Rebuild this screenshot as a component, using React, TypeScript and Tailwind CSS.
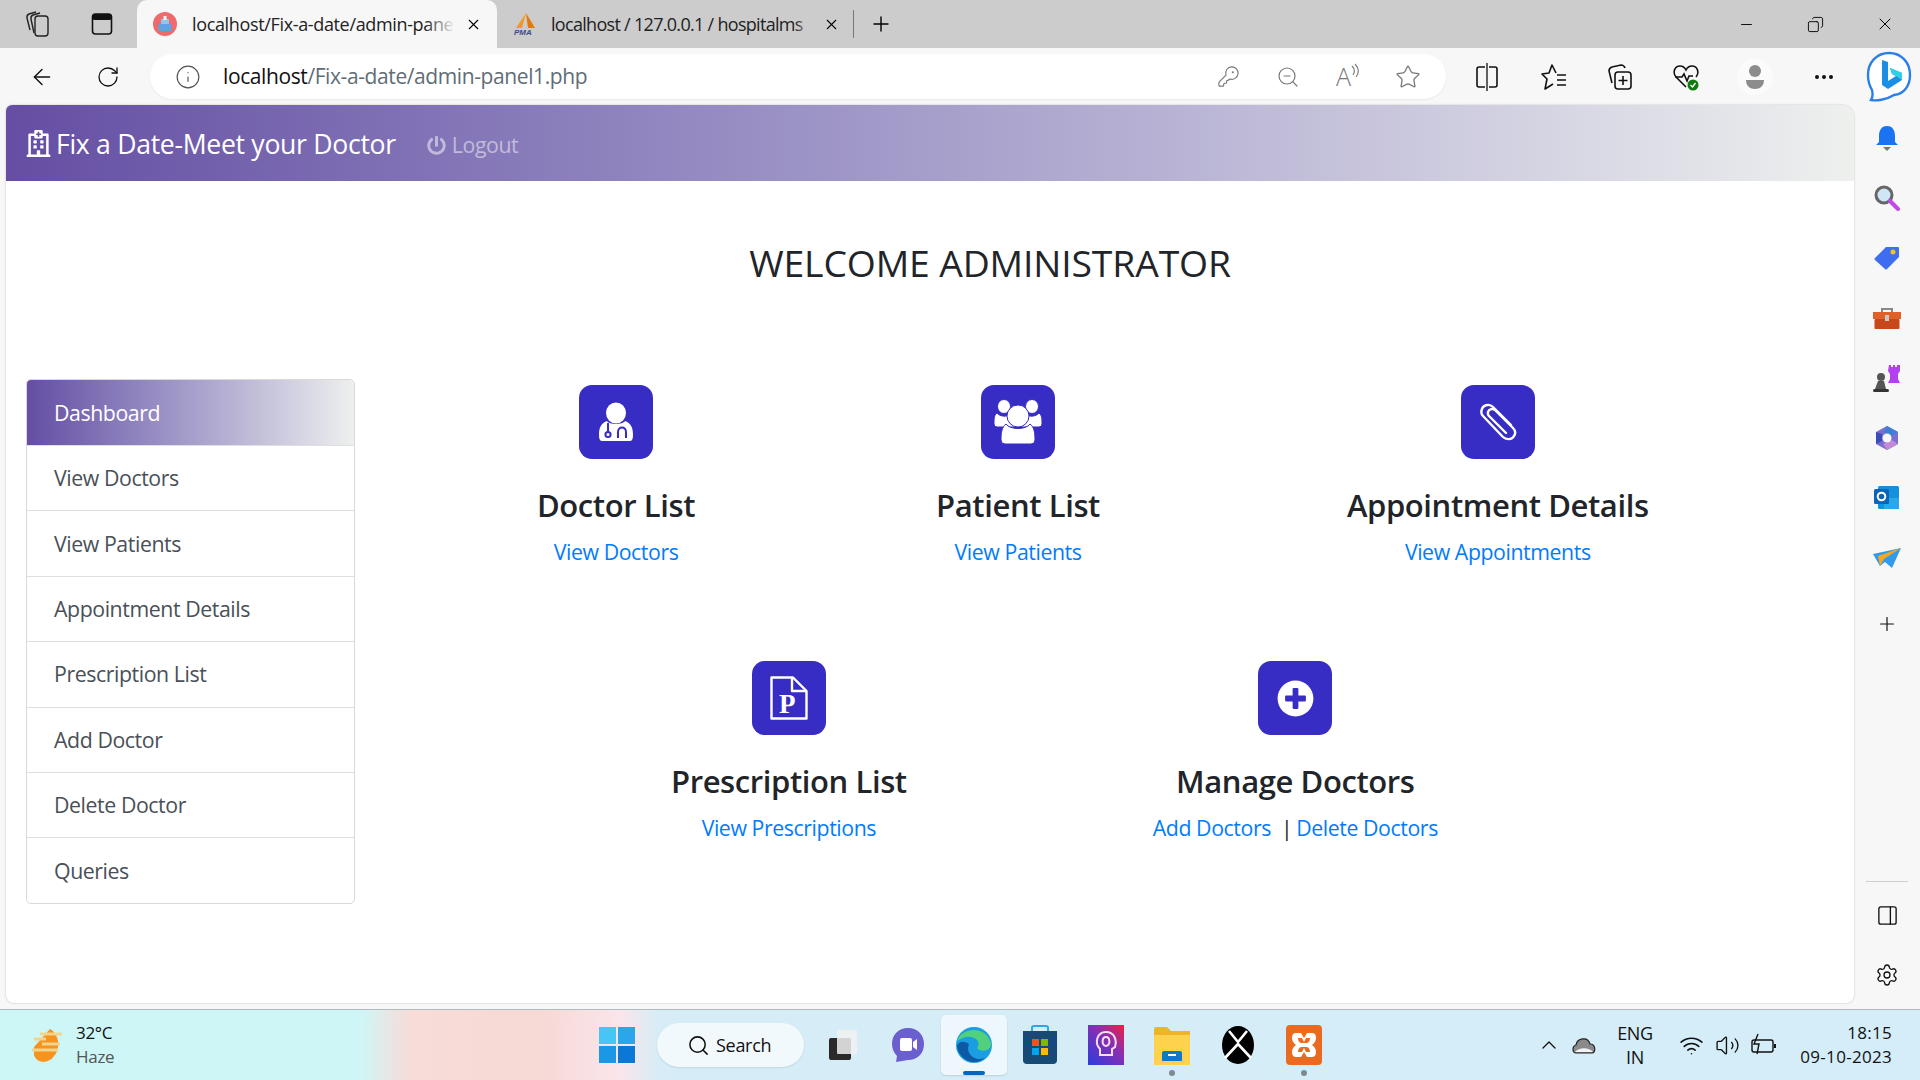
import type { ReactNode } from 'react';
import {
  ArrowLeft,
  ChevronUp,
  Copy,
  Ellipsis,
  KeyRound,
  Info,
  Minus,
  PanelRight,
  Plus,
  RotateCw,
  Search,
  Settings,
  Star,
  Volume2,
  Wifi,
  X,
  ZoomOut,
} from 'lucide-react';
import { FaPlusCircle, FaPowerOff, FaRegHospital } from 'react-icons/fa';

const MENU = [
  'View Doctors',
  'View Patients',
  'Appointment Details',
  'Prescription List',
  'Add Doctor',
  'Delete Doctor',
  'Queries',
];

function TabBar() {
  return (
    <div className="flex h-12 items-center bg-[#cccccc] text-black">
      <div className="flex w-[137px] shrink-0 items-center">
        <span className="flex w-[76px] justify-center">
          <svg width="26" height="28" viewBox="0 0 26 28" fill="none" stroke="#222" strokeWidth="1.4">
            <path d="M5 20 L2 8 Q1.5 5 4 4 L11 2" />
            <path d="M9 23 L6 9 Q5.5 6 8 5 L15 3" />
            <rect x="10" y="6" width="13" height="20" rx="3" />
          </svg>
        </span>
        <span className="flex w-[61px] justify-start pl-[15px]">
          <svg width="22" height="24" viewBox="0 0 22 24">
            <rect x="1.5" y="2" width="19" height="20" rx="3" fill="none" stroke="#111" strokeWidth="1.6" />
            <rect x="1.5" y="2" width="19" height="6" rx="2" fill="#111" />
          </svg>
        </span>
      </div>
      <div className="relative flex h-12 w-[360px] shrink-0 items-center rounded-t-[10px] bg-[#f7f7f7] pl-4">
        <svg width="24" height="24" viewBox="0 0 24 24" className="shrink-0">
          <circle cx="12" cy="12" r="12" fill="#ef6a6a" />
          <rect x="8" y="7" width="8" height="12" fill="#8ec6ee" />
          <rect x="10.5" y="4" width="3" height="4" fill="#f3f3f3" />
          <rect x="5.5" y="12" width="13" height="7" fill="#5aa4e0" />
        </svg>
        <span className="relative ml-[15px] w-[263px] shrink-0 overflow-hidden whitespace-nowrap text-[18px] tracking-[-0.35px] text-[#222]">
          localhost/Fix-a-date/admin-pane
          <span className="absolute inset-y-0 right-0 w-[30px] bg-gradient-to-r from-transparent to-[#f7f7f7]" />
        </span>
        <X size={17} strokeWidth={1.5} className="ml-[10px] shrink-0" />
      </div>
      <div className="flex h-12 shrink-0 items-center pl-[16px]">
        <svg width="24" height="24" viewBox="0 0 24 24" className="shrink-0">
          <path d="M13 1 L9 16 L3 16 Z" fill="#f29a1f" />
          <path d="M13 1 L22 16 L15 16 Z" fill="#e8760c" />
          <text x="1" y="23" fontSize="8" fontWeight="700" fontStyle="italic" fill="#3b4a86" fontFamily="Liberation Sans">
            PMA
          </text>
        </svg>
        <span className="relative ml-[14px] w-[262px] shrink-0 overflow-hidden whitespace-nowrap text-[18px] tracking-[-0.7px] text-[#222]">
          localhost / 127.0.0.1 / hospitalms
          <span className="absolute inset-y-0 right-0 w-[18px] bg-gradient-to-r from-transparent to-[#cccccc]" />
        </span>
        <X size={17} strokeWidth={1.5} className="ml-[10px] shrink-0" />
        <span className="ml-[13px] h-7 w-px shrink-0 bg-[#777]" />
        <Plus size={24} strokeWidth={1.4} className="ml-[15px] shrink-0" />
      </div>
      <div className="ml-auto flex items-center">
        <span className="flex w-[69px] justify-center">
          <Minus size={17} strokeWidth={1.3} />
        </span>
        <span className="flex w-[69px] justify-center">
          <Copy size={17} strokeWidth={1.3} className="-scale-x-100" />
        </span>
        <span className="flex w-[70px] justify-center">
          <X size={20} strokeWidth={1.2} />
        </span>
      </div>
    </div>
  );
}

function ToolSlot({ className, children }: { className: string; children: ReactNode }) {
  return <span className={`flex shrink-0 items-center justify-center ${className}`}>{children}</span>;
}

function BingLogo() {
  return (
    <svg width="46" height="52" viewBox="0 0 46 52">
      <path
        d="M23 2 C35 2 44 11 44 24 C44 35 38 43 28 44 C20 49 10 50 5 49 C7 46 7 43 6 39 C3 34 2 29 2 24 C2 11 11 2 23 2 Z"
        fill="#fff"
        stroke="#2a7fe8"
        strokeWidth="2.4"
      />
      <path d="M16 9 L22 11 L22 30 L30 25 L26 23 L24 17 L36 22 L36 29 L22 38 L16 34 Z" fill="#1b8fe6" />
      <path d="M24 17 L36 22 L36 29 L30 25 L26 23 Z" fill="#2fd0e8" />
    </svg>
  );
}

function ToolBar() {
  return (
    <div className="flex h-[57px] items-center bg-[#f7f7f7] text-[#111]">
      <ToolSlot className="w-[84px]">
        <ArrowLeft size={26} strokeWidth={1.3} />
      </ToolSlot>
      <ToolSlot className="w-[48px]">
        <RotateCw size={24} strokeWidth={1.3} />
      </ToolSlot>
      <div className="ml-[18px] flex h-[45px] w-[1296px] shrink-0 items-center rounded-full bg-white pl-[25px] shadow-[0_1px_2px_rgba(0,0,0,0.06)]">
        <Info size={26} strokeWidth={1.1} className="shrink-0 text-[#555]" />
        <span className="ml-[22px] text-[21px] tracking-[-0.4px] text-[#5f6d75]">
          <span className="text-[#111]">localhost</span>/Fix-a-date/admin-panel1.php
        </span>
        <span className="ml-auto flex items-center pr-[8px] text-[#777]">
          <ToolSlot className="w-[60px]">
            <KeyRound size={23} strokeWidth={1.2} />
          </ToolSlot>
          <ToolSlot className="w-[60px]">
            <ZoomOut size={24} strokeWidth={1.2} />
          </ToolSlot>
          <ToolSlot className="w-[60px]">
            <span className="text-[25px] font-light leading-none">A</span>
            <svg width="9" height="16" viewBox="0 0 9 16" fill="none" stroke="#777" strokeWidth="1.1" className="mb-3">
              <path d="M1 3 C4 6 4 9 2 12 M4 1 C8 5 8 10 5 14" />
            </svg>
          </ToolSlot>
          <ToolSlot className="w-[60px]">
            <Star size={26} strokeWidth={1.2} />
          </ToolSlot>
        </span>
      </div>
      <ToolSlot className="ml-[11px] w-[60px]">
        <svg width="24" height="30" viewBox="0 0 24 30" fill="none" stroke="#111" strokeWidth="1.6">
          <path d="M10 5 H4 Q2 5 2 7 V23 Q2 25 4 25 H10" />
          <path d="M14 5 H20 Q22 5 22 7 V23 Q22 25 20 25 H14" />
          <path d="M12 1 V29" strokeWidth="1.3" />
        </svg>
      </ToolSlot>
      <ToolSlot className="ml-[4px] w-[66px]">
        <svg width="26" height="28" viewBox="0 0 26 28" fill="none" stroke="#111" strokeWidth="1.6">
          <path d="M15 10 L11 2 L8 10 L1 11 L6 16 L4 26 L12 21" strokeLinejoin="round" />
          <path d="M16 12 H25 M16 17 H25 M16 22 H25" />
        </svg>
      </ToolSlot>
      <ToolSlot className="w-[66px]">
        <svg width="26" height="28" viewBox="0 0 26 28" fill="none" stroke="#111" strokeWidth="1.6">
          <path d="M5 20 L2 8 Q2 5 5 4 L14 2 Q17 2 18 5" />
          <rect x="8" y="9" width="16" height="17" rx="3" />
          <path d="M16 13 V22 M11.5 17.5 H20.5" />
        </svg>
      </ToolSlot>
      <ToolSlot className="w-[66px]">
        <svg width="28" height="28" viewBox="0 0 28 28" fill="none" stroke="#111" strokeWidth="1.6">
          <path d="M14 24 L4 14 C0 9 3 3 8 3 C11 3 13 5 14 7 C15 5 17 3 20 3 C25 3 28 9 24 14" />
          <path d="M3 14 H10 L12 11 L15 18 L17 13 H21" />
          <circle cx="21" cy="22" r="5.5" fill="#107c10" stroke="none" />
          <path d="M18.5 22 L20.5 24 L23.5 20" stroke="#fff" strokeWidth="1.3" />
        </svg>
      </ToolSlot>
      <ToolSlot className="w-[72px]">
        <span className="flex h-[36px] w-[36px] items-center justify-center rounded-full bg-[#fbfbfb]">
          <svg width="22" height="26" viewBox="0 0 22 26" fill="#8c8c8c">
            <circle cx="11" cy="7" r="6" />
            <path d="M2 16 H20 C20 22 16 25 11 25 C6 25 2 22 2 16 Z" />
          </svg>
        </span>
      </ToolSlot>
      <ToolSlot className="w-[66px]">
        <Ellipsis size={24} strokeWidth={2} />
      </ToolSlot>
      <ToolSlot className="ml-auto w-[64px]">
        <BingLogo />
      </ToolSlot>
    </div>
  );
}

function SideIcon({ children }: { children: ReactNode }) {
  return <span className="flex h-[60px] items-center justify-center">{children}</span>;
}

function EdgeSidebar() {
  return (
    <aside className="flex w-[66px] shrink-0 flex-col items-center pt-[3px] text-[#111]">
      <SideIcon>
        <svg width="24" height="26" viewBox="0 0 24 26">
          <path d="M12 1 C18 1 20 6 20 11 V17 L23 20 H1 L4 17 V11 C4 6 6 1 12 1 Z" fill="#1a73f0" />
          <path d="M8 22 H16 L12 26 Z" fill="#777" />
        </svg>
      </SideIcon>
      <SideIcon>
        <svg width="26" height="26" viewBox="0 0 26 26">
          <circle cx="10" cy="10" r="8" fill="#cfe6f7" stroke="#666" strokeWidth="3" />
          <path d="M16 16 L24 24" stroke="#c04ae8" strokeWidth="4" strokeLinecap="round" />
        </svg>
      </SideIcon>
      <SideIcon>
        <svg width="26" height="24" viewBox="0 0 26 24">
          <path d="M12 1 H24 Q25 1 25 2 V11 L13 23 Q12 24 11 23 L1 14 Q0 13 1 12 Z" fill="#3f6df0" />
          <circle cx="19" cy="6" r="2.5" fill="#f5c518" />
        </svg>
      </SideIcon>
      <SideIcon>
        <svg width="28" height="22" viewBox="0 0 28 22">
          <path d="M9 6 V2 H19 V6" fill="none" stroke="#888" strokeWidth="2" />
          <rect x="0" y="5" width="28" height="7" fill="#e0602a" />
          <rect x="1.5" y="12" width="25" height="10" rx="1" fill="#c8481c" />
          <rect x="12" y="8" width="4" height="6" fill="#c9c9c9" />
        </svg>
      </SideIcon>
      <SideIcon>
        <svg width="28" height="28" viewBox="0 0 28 28">
          <path d="M16 1 H18 V3 H20 V1 H22 V3 H24 V1 H27 V7 L25 10 V15 L27 19 H15 L17 15 V10 L15 7 Z" fill="#b23ff0" />
          <circle cx="8" cy="13" r="4" fill="#555" />
          <path d="M5 17 H11 L13 25 H2 L5 17 Z" fill="#555" />
          <rect x="0" y="25" width="16" height="3" rx="1.5" fill="#333" />
        </svg>
      </SideIcon>
      <SideIcon>
        <svg width="26" height="26" viewBox="0 0 26 26">
          <path d="M13 1 L24 7 V19 L13 25 L2 19 V7 Z" fill="#7a6fd0" />
          <path d="M13 1 L24 7 L17 11 L10 7 Z" fill="#3c7fd6" />
          <path d="M2 7 V19 L8 16 V9 Z" fill="#3b4cb8" />
          <path d="M24 19 L13 25 L9 19 L18 15 Z" fill="#c38ad8" />
          <circle cx="13" cy="13" r="4.5" fill="#f7f7f7" />
        </svg>
      </SideIcon>
      <SideIcon>
        <svg width="26" height="24" viewBox="0 0 26 24">
          <rect x="4" y="0" width="21" height="23" rx="1.5" fill="#1490df" />
          <path d="M10 12 L25 12 V23 H10 Z" fill="#28a8ea" />
          <rect x="0" y="3" width="15" height="15" rx="1.5" fill="#0a64b8" />
          <circle cx="7.5" cy="10.5" r="3.8" fill="none" stroke="#fff" strokeWidth="2" />
        </svg>
      </SideIcon>
      <SideIcon>
        <svg width="28" height="20" viewBox="0 0 28 20">
          <path d="M0 6 L28 0 L19 20 L12 14 L7 18 Z" fill="#2f9bea" />
          <path d="M7 18 L5 8 L28 0 L11 11 Z" fill="#f5a623" />
        </svg>
      </SideIcon>
      <span className="flex h-[71px] items-center justify-center">
        <Plus size={22} strokeWidth={1.3} />
      </span>
      <span className="mt-[222px] h-px w-[42px] bg-[#d0d0d0]" />
      <span className="flex h-[66px] items-center justify-center">
        <PanelRight size={23} strokeWidth={1.4} />
      </span>
      <span className="flex h-[54px] items-center justify-center">
        <Settings size={24} strokeWidth={1.3} />
      </span>
    </aside>
  );
}

function Sidebar() {
  return (
    <div className="ml-[20px] w-[329px] shrink-0 self-start overflow-hidden rounded-[5px] border border-[#d9d9d9] bg-white text-[21.3px] tracking-[-0.42px] text-[#495057]">
      <div className="flex h-[65px] items-center bg-gradient-to-r from-[#654ea3] to-[#eef0ee] pl-[27px] text-white">
        Dashboard
      </div>
      {MENU.map((item) => (
        <div key={item} className="flex h-[65.4px] items-center border-t border-[#dfdfdf] pl-[27px]">
          {item}
        </div>
      ))}
    </div>
  );
}

function DoctorIcon() {
  return (
    <svg width="36" height="40" viewBox="0 0 36 40" fill="#fff">
      <ellipse cx="18" cy="11" rx="10" ry="10.5" />
      <path d="M9 19 C4 21 1 24 1 33 Q1 39 4 39 H32 Q35 39 35 33 C35 24 32 21 27 19 C25 23 11 23 9 19 Z" />
      <path d="M10 21 V30" stroke="#372cc4" strokeWidth="2" fill="none" />
      <circle cx="10" cy="32.5" r="2.6" fill="none" stroke="#372cc4" strokeWidth="2" />
      <path d="M20 36 V30 C20 24 28 24 28 30 V36" stroke="#372cc4" strokeWidth="2" fill="none" />
    </svg>
  );
}

function UsersIcon() {
  return (
    <svg width="48" height="46" viewBox="0 0 48 46" fill="#fff" stroke="#372cc4" strokeWidth="1">
      <ellipse cx="10" cy="7.5" rx="6.5" ry="7" />
      <ellipse cx="38" cy="7.5" rx="6.5" ry="7" />
      <path d="M3 14 C0 16 0 20 0 25 Q0 28 3 28 H45 Q48 28 48 25 C48 20 48 16 45 14 C42 18 34 18 32 15 L16 15 C14 18 6 18 3 14 Z" />
      <path d="M12 25 C8 28 7 33 7 41 Q7 45 11 45 H37 Q41 45 41 41 C41 33 40 28 36 25 C32 31 16 31 12 25 Z" />
      <ellipse cx="24" cy="17" rx="11" ry="11" />
    </svg>
  );
}

function ClipIcon() {
  return (
    <svg width="38" height="38" viewBox="0 0 38 38" fill="none" stroke="#fff" strokeWidth="2.4" strokeLinecap="round" strokeLinejoin="round">
      <path d="M32 22 L14 4 C10 0 3 2 2.5 8 C2 10 3 12 4 13 L24 34 C27 37 33 37 35 33 C37 30 36 27 34 25 L16 7 C14 5 10 6 9 9 C8.5 11 9 12 10 13 L27 30" />
    </svg>
  );
}

function PrescriptionIcon() {
  return (
    <svg width="38" height="44" viewBox="0 0 38 44" fill="none" stroke="#fff" strokeWidth="2.4" strokeLinejoin="round">
      <path d="M1.5 1.5 H23 L36.5 15 V42.5 H1.5 Z" />
      <path d="M22 1.5 V15 H36.5" />
      <text x="9" y="37" fontSize="27" fontWeight="700" fill="#fff" stroke="none" fontFamily="Liberation Serif">
        P
      </text>
    </svg>
  );
}

function Feature({
  icon,
  title,
  className = '',
  children,
}: {
  icon: ReactNode;
  title: string;
  className?: string;
  children: ReactNode;
}) {
  return (
    <div className={`flex flex-col items-center ${className}`}>
      <span className="flex h-[74px] w-[74px] items-center justify-center rounded-[13px] bg-[#372cc4] text-white">
        {icon}
      </span>
      <h4 className="mt-[27px] whitespace-nowrap text-[31px] font-semibold leading-[38px] tracking-[-0.4px] text-[#212529]">
        {title}
      </h4>
      <div className="mt-[9px] whitespace-nowrap text-[21.3px] leading-[38px] tracking-[-0.42px] text-[#007bff]">
        {children}
      </div>
    </div>
  );
}

function Page() {
  return (
    <main className="h-[898px] overflow-hidden rounded-b-[8px] rounded-tl-[6px] rounded-tr-[12px] bg-white shadow-[0_0_2px_rgba(0,0,0,0.25)]">
      <header className="flex h-[76px] items-center bg-gradient-to-r from-[#654ea3] to-[#eef0ee] pl-[19px]">
        <FaRegHospital size={27} className="text-white" />
        <span className="ml-[4px] pt-[4px] text-[26.6px] tracking-[-0.3px] text-white">Fix a Date-Meet your Doctor</span>
        <span className="ml-[31px] flex items-center pt-[4px] text-[21.3px] tracking-[-0.42px] text-white/50">
          <FaPowerOff size={19} className="mr-[6px]" />
          Logout
        </span>
      </header>
      <h3 className="mt-[57px] pl-[120px] text-center text-[37.3px] font-normal leading-[50px] tracking-[-0.13px] text-[#212529]">
        WELCOME ADMINISTRATOR
      </h3>
      <div className="mt-[91px] flex">
        <Sidebar />
        <div className="flex flex-col pt-[6px]">
          <div className="ml-[182px] flex gap-[241px]">
            <Feature icon={<DoctorIcon />} title="Doctor List">
              View Doctors
            </Feature>
            <Feature icon={<UsersIcon />} title="Patient List">
              View Patients
            </Feature>
            <Feature icon={<ClipIcon />} title="Appointment Details" className="ml-[6px]">
              View Appointments
            </Feature>
          </div>
          <div className="ml-[316px] mt-[90px] flex gap-[246px]">
            <Feature icon={<PrescriptionIcon />} title="Prescription List">
              View Prescriptions
            </Feature>
            <Feature icon={<FaPlusCircle size={37} />} title="Manage Doctors">
              Add Doctors<span className="ml-[10px] mr-[4px] text-[#212529]">|</span>Delete Doctors
            </Feature>
          </div>
        </div>
      </div>
    </main>
  );
}

function TaskSlot({ children, active, dot }: { children: ReactNode; active?: boolean; dot?: boolean }) {
  return (
    <span
      className={`relative flex h-[60px] w-[66px] shrink-0 items-center justify-center rounded-[5px] ${
        active ? 'bg-[#eef7fc] shadow-[0_1px_2px_rgba(0,0,0,0.12)]' : ''
      }`}
    >
      {children}
      {active && <span className="absolute bottom-0 h-[4px] w-[22px] rounded-full bg-[#0067c0]" />}
      {dot && <span className="absolute bottom-[-1px] h-[6px] w-[6px] rounded-full bg-[#7d8a90]" />}
    </span>
  );
}

function Taskbar() {
  return (
    <footer className="flex h-[71px] items-center border-t border-[#aebcc0] bg-[linear-gradient(90deg,#cdf6f7_0,#cff6f7_360px,#f7dcd8_410px,#f7d9d5_540px,#fae5ea_620px,#d6edf7_660px,#d4edf8_100%)] text-[#111]">
      <span className="ml-[28px] flex w-[48px] shrink-0 justify-start">
        <svg width="36" height="36" viewBox="0 0 36 36">
          <path d="M22 2 C32 8 34 24 22 33 C14 37 8 34 6 28 L6 20 Z" fill="#f7931e" />
          <path d="M6 12 H18 M12 7 H34 M14 17 H32 M4 23 H30" stroke="#f2d58c" strokeWidth="3" />
        </svg>
      </span>
      <span className="flex w-[100px] shrink-0 flex-col text-[17px] leading-[24px] tracking-[-0.3px]">
        <span>32°C</span>
        <span className="text-[#555]">Haze</span>
      </span>
      <span className="ml-[423px] flex shrink-0">
        <svg width="36" height="36" viewBox="0 0 36 36">
          <rect x="0" y="0" width="17" height="17" fill="#45c6f7" />
          <rect x="19" y="0" width="17" height="17" fill="#2aa6ec" />
          <rect x="0" y="19" width="17" height="17" fill="#1a97e6" />
          <rect x="19" y="19" width="17" height="17" fill="#0a78d4" />
        </svg>
      </span>
      <span className="ml-[22px] flex h-[44px] w-[147px] shrink-0 items-center rounded-full bg-[#f1f9fd] pl-[30px] text-[18px] tracking-[-0.3px] shadow-[0_1px_2px_rgba(0,0,0,0.1)]">
        <Search size={23} strokeWidth={1.6} className="mr-[6px]" />
        Search
      </span>
      <span className="ml-[5px] flex shrink-0">
        <TaskSlot>
          <svg width="34" height="34" viewBox="0 0 34 34">
            <rect x="4" y="10" width="22" height="22" rx="2" fill="#2a2a2a" />
            <rect x="12" y="2" width="20" height="24" rx="1" fill="#f1f1f1" fillOpacity="0.85" />
          </svg>
        </TaskSlot>
        <TaskSlot>
          <svg width="34" height="36" viewBox="0 0 34 36">
            <path d="M17 1 C27 1 33 8 33 17 C33 27 26 33 17 33 L5 35 L6 29 C3 26 1 22 1 17 C1 8 7 1 17 1 Z" fill="#6b5fd0" />
            <rect x="9" y="11" width="12" height="13" rx="2" fill="#fff" />
            <path d="M22 15 L26 12 V23 L22 20 Z" fill="#fff" />
          </svg>
        </TaskSlot>
        <TaskSlot active>
          <svg width="38" height="38" viewBox="0 0 38 38">
            <circle cx="19" cy="19" r="18" fill="#1b9de2" />
            <path d="M2 15 C6 2 30 -2 36 17 C37 25 26 27 22 22 C28 14 16 8 8 12 C5 13 3 14 2 15 Z" fill="#52d17c" />
            <path d="M2 20 C3 32 18 42 30 32 C20 36 10 28 14 18 C8 14 3 16 2 20 Z" fill="#0c59a4" />
          </svg>
        </TaskSlot>
        <TaskSlot>
          <svg width="36" height="40" viewBox="0 0 36 40">
            <path d="M10 6 V3 Q10 1 12 1 H24 Q26 1 26 3 V6" fill="none" stroke="#28a8ea" strokeWidth="2" />
            <path d="M1 6 H35 V35 Q35 39 31 39 H5 Q1 39 1 35 Z" fill="#184a78" />
            <rect x="10" y="14" width="7" height="7" fill="#f25022" />
            <rect x="19" y="14" width="7" height="7" fill="#7fba00" />
            <rect x="10" y="23" width="7" height="7" fill="#00a4ef" />
            <rect x="19" y="23" width="7" height="7" fill="#ffb900" />
          </svg>
        </TaskSlot>
        <TaskSlot>
          <svg width="36" height="40" viewBox="0 0 36 40">
            <defs>
              <linearGradient id="apg" x1="0" y1="1" x2="1" y2="0">
                <stop offset="0" stopColor="#2b3be0" />
                <stop offset="0.6" stopColor="#8a2fb0" />
                <stop offset="1" stopColor="#f0203c" />
              </linearGradient>
            </defs>
            <rect width="36" height="40" fill="url(#apg)" />
            <path d="M12 30 V24 C6 18 9 7 18 7 C27 7 29 16 27 22 L24 24 V30 Z M18 12 C14 12 13 20 18 21 C23 20 22 12 18 12 Z" fill="none" stroke="#f4dff0" strokeWidth="2" />
          </svg>
        </TaskSlot>
        <TaskSlot dot>
          <svg width="36" height="40" viewBox="0 0 36 40">
            <path d="M0 4 Q0 2 2 2 H13 L17 6 H36 V38 H0 Z" fill="#f0b429" />
            <rect x="0" y="10" width="36" height="30" fill="#ffd24d" />
            <path d="M10 26 H26 Q28 26 28 28 V36 H8 V28 Q8 26 10 26 Z" fill="#0f78c8" />
            <rect x="14" y="29" width="8" height="2" fill="#fff" />
          </svg>
        </TaskSlot>
        <TaskSlot>
          <svg width="32" height="38" viewBox="0 0 32 38">
            <ellipse cx="16" cy="19" rx="16" ry="19" fill="#000" />
            <path d="M7 5 L16 16 L25 5 M3 32 L16 18 L29 32" fill="none" stroke="#fff" strokeWidth="2.6" />
          </svg>
        </TaskSlot>
        <TaskSlot dot>
          <svg width="36" height="40" viewBox="0 0 36 40">
            <rect width="36" height="40" rx="4" fill="#ea6a1f" />
            <path d="M10 8 H15 L18 13 L21 8 H26 Q30 8 30 13 Q30 17 26 20 Q30 23 30 27 Q30 32 26 32 H21 L18 27 L15 32 H10 Q6 32 6 27 Q6 23 10 20 Q6 17 6 13 Q6 8 10 8 Z M12 13 Q12 17 15 18 L21 18 Q24 17 24 13 L20 13 L18 17 L16 13 Z M12 27 L16 27 L18 23 L20 27 L24 27 Q24 23 21 22 L15 22 Q12 23 12 27 Z" fill="#fff" fillRule="evenodd" />
          </svg>
        </TaskSlot>
      </span>
      <span className="ml-auto flex items-center pr-[28px]">
        <ChevronUp size={24} strokeWidth={1.3} />
        <svg width="26" height="24" viewBox="0 0 26 24" className="ml-[10px]">
          <path d="M5 20 C1 20 1 13 5 12 C6 5 17 3 19 11 C25 11 25 20 21 20 Z" fill="#8a8a8a" stroke="#222" strokeWidth="1.2" />
          <path d="M4 19 C8 14 18 14 22 19 Z" fill="#f2f2f2" />
        </svg>
        <span className="ml-[18px] flex w-[40px] flex-col items-center text-[18px] leading-[24px] tracking-[-0.3px]">
          <span>ENG</span>
          <span>IN</span>
        </span>
        <Wifi size={25} strokeWidth={1.5} className="ml-[24px]" />
        <Volume2 size={25} strokeWidth={1.3} className="ml-[11px]" />
        <svg width="28" height="26" viewBox="0 0 28 26" fill="none" stroke="#111" strokeWidth="1.4" className="ml-[10px]">
          <rect x="2" y="8" width="21" height="12" rx="2" />
          <path d="M25 12 V16" strokeWidth="2" />
          <path d="M8 2 L4 12 H9 L7 22" />
        </svg>
        <span className="ml-[19px] flex w-[95px] flex-col items-end text-[17px] leading-[24px] tracking-[0.3px]">
          <span>18:15</span>
          <span className="whitespace-nowrap">09-10-2023</span>
        </span>
      </span>
    </footer>
  );
}

export default function App() {
  return (
    <div className="flex h-[1080px] w-[1920px] flex-col overflow-hidden bg-[#f7f7f7] font-['Open_Sans','Noto_Sans',sans-serif]">
      <TabBar />
      <ToolBar />
      <div className="flex h-[904px] shrink-0">
        <div className="ml-[6px] w-[1848px] shrink-0">
          <Page />
        </div>
        <EdgeSidebar />
      </div>
      <Taskbar />
    </div>
  );
}
